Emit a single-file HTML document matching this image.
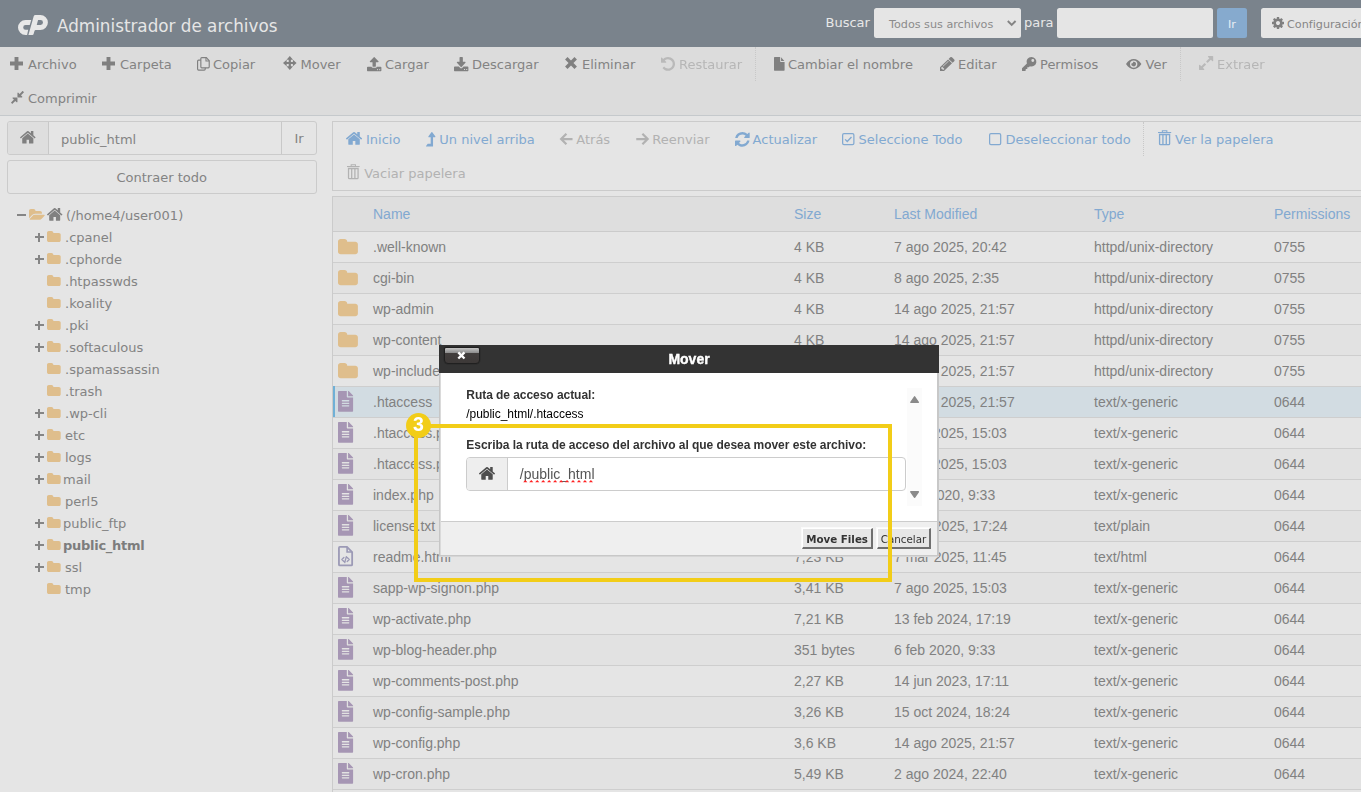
<!DOCTYPE html>
<html lang="es"><head><meta charset="utf-8"><title>Administrador de archivos</title>
<style>
*{box-sizing:border-box;margin:0;padding:0}
html,body{width:1361px;height:792px;overflow:hidden;background:#e5e5e5}
body{position:relative;font-family:"DejaVu Sans","Liberation Sans",sans-serif;font-size:13px;color:#838383}
.i{position:absolute;display:block;overflow:visible}
.t{position:absolute;white-space:nowrap;line-height:20px;height:20px}
.a{font-family:"Liberation Sans",sans-serif;font-size:14px;color:#818181}
#hdr{position:absolute;left:0;top:0;width:1361px;height:47px;background:#7a838c}
#hdr .title{font-size:16.8px;color:#e6e6e6;left:57px;top:16px}
#hdr .lbl{color:#e8e8e8;font-size:13px}
.fld{position:absolute;top:8px;height:30px;background:#e5e5e5;border-radius:2.5px}
#tb{position:absolute;left:0;top:47px;width:1361px;height:69px;background:#dcdcdc;border-bottom:1px solid #c5c9cc}
.sep{position:absolute;top:47px;height:34px;width:0;border-left:1px dotted #c8c8c8}
.dis{color:#b6b6b6;will-change:transform}
.lnk{color:#82a9d1}
.box{position:absolute;border:1px solid #cbcbcb;border-radius:3px}

</style></head>
<body>
<div id="hdr"><svg class="i" style="left:17.790px;top:14.920px" width="29.920" height="20.080" viewBox="100 130 790 530"><path fill="#e8e8e8" fill-rule="evenodd" d="M450 260H300A200 200 0 0 0 300 660H340L370 520H300A62.500 62.500 0 0 1 300 395H410ZM375 660H480Q505 660 512 635L535 550Q542 525 568 525H692A197.500 197.500 0 0 0 692 130H560Q525 130 515 165ZM630 265H695A65 65 0 0 1 695 395H595Z"/></svg><div class="t title">Administrador de archivos</div><div class="t lbl" style="left:825.5px;top:12.5px">Buscar</div><div class="fld" style="left:874px;width:147px"><div class="t" style="left:15px;top:7px;font-size:11.2px;color:#8b8b8b">Todos sus archivos</div><svg class="i" style="left:133.200px;top:11.600px" width="9.400" height="6.600" viewBox="0 0 94 66"><path d="M8 10 47 50 86 10" fill="none" stroke="#848484" stroke-width="19"/></svg></div><div class="t lbl" style="left:1024px;top:12.5px">para</div><div class="fld" style="left:1057px;width:156px"></div><div class="fld" style="left:1217px;width:30px;background:#86aace"><div class="t" style="left:11px;top:7px;font-size:11.2px;color:#e9eef4">Ir</div></div><div class="fld" style="left:1261px;width:110px"><svg class="i" style="left:11px;top:8px" width="12.00" height="14" viewBox="0 -0 1536 1792" ><path fill="#7f7f7f" d="M949 1077Q1024 1002 1024 896Q1024 790 949 715Q874 640 768 640Q662 640 587 715Q512 790 512 896Q512 1002 587 1077Q662 1152 768 1152Q874 1152 949 1077ZM1536 787V1009Q1536 1021 1528 1032Q1520 1043 1508 1045L1323 1073Q1304 1127 1284 1164Q1319 1214 1391 1302Q1401 1314 1401 1327Q1401 1340 1392 1350Q1365 1387 1293 1458Q1221 1529 1199 1529Q1187 1529 1173 1520L1035 1412Q991 1435 944 1450Q928 1586 915 1636Q908 1664 879 1664H657Q643 1664 632 1656Q622 1647 621 1634L593 1450Q544 1434 503 1413L362 1520Q352 1529 337 1529Q323 1529 312 1518Q186 1404 147 1350Q140 1340 140 1327Q140 1315 148 1304Q163 1283 199 1238Q235 1192 253 1167Q226 1117 212 1068L29 1041Q16 1039 8 1028Q0 1018 0 1005V783Q0 771 8 760Q16 749 27 747L213 719Q227 673 252 627Q212 570 145 489Q135 477 135 465Q135 455 144 442Q170 406 242 334Q315 263 337 263Q350 263 363 273L501 380Q545 357 592 342Q608 206 621 156Q628 128 657 128H879Q893 128 904 136Q914 145 915 158L943 342Q992 358 1033 379L1175 272Q1184 263 1199 263Q1212 263 1224 273Q1353 392 1389 443Q1396 451 1396 465Q1396 477 1388 488Q1373 509 1337 554Q1301 600 1283 625Q1309 675 1324 723L1507 751Q1520 753 1528 764Q1536 774 1536 787Z"/></svg><div class="t" style="left:26px;top:7px;font-size:11.2px;color:#858585">Configuración</div></div></div>
<div id="tb"></div><svg class="i" style="left:10.00px;top:57.00px" width="13.00" height="13.00" viewBox="0 0 100 100" preserveAspectRatio="none"><path fill="#808080" d="M35 0h30v35h35v30H65v35H35V65H0V35h35z"/></svg><div class="t" style="left:28px;top:54.5px">Archivo</div><svg class="i" style="left:102.20px;top:57.00px" width="13.00" height="13.00" viewBox="0 0 100 100" preserveAspectRatio="none"><path fill="#808080" d="M35 0h30v35h35v30H65v35H35V65H0V35h35z"/></svg><div class="t" style="left:120px;top:54.5px">Carpeta</div><svg class="i" style="left:197.00px;top:57.00px" width="12.80" height="13.80" viewBox="0 0 100 100" preserveAspectRatio="none"><rect x="4.500" y="22" width="60" height="73.500" rx="8" fill="none" stroke="#808080" stroke-width="9"/><path d="M37 4.500h36l22.500 22.500v44a7 7 0 0 1-7 7H37a7 7 0 0 1-7-7V11.500a7 7 0 0 1 7-7z" fill="#dcdcdc" stroke="#808080" stroke-width="9"/><path d="M70 4.500V29h25" fill="none" stroke="#808080" stroke-width="8"/></svg><div class="t" style="left:213px;top:54.5px">Copiar</div><svg class="i" style="left:282.70px;top:56.00px" width="13.60" height="14.00" viewBox="0 0 100 100" preserveAspectRatio="none"><path fill="#808080" d="M50 0 74 27H58v15h15V26l27 24-27 24V58H58v15h16L50 100 26 73h16V58H27v16L0 50l27-24v16h15V27H26z"/></svg><div class="t" style="left:300.5px;top:54.5px">Mover</div><svg class="i" style="left:367.10px;top:56.50px" width="14.40" height="14.30" viewBox="0 64 1664 1600" preserveAspectRatio="none"><path fill="#808080" d="M1261 1517Q1280 1498 1280 1472Q1280 1446 1261 1427Q1242 1408 1216 1408Q1190 1408 1171 1427Q1152 1446 1152 1472Q1152 1498 1171 1517Q1190 1536 1216 1536Q1242 1536 1261 1517ZM1517 1517Q1536 1498 1536 1472Q1536 1446 1517 1427Q1498 1408 1472 1408Q1446 1408 1427 1427Q1408 1446 1408 1472Q1408 1498 1427 1517Q1446 1536 1472 1536Q1498 1536 1517 1517ZM1664 1248V1568Q1664 1608 1636 1636Q1608 1664 1568 1664H96Q56 1664 28 1636Q0 1608 0 1568V1248Q0 1208 28 1180Q56 1152 96 1152H523Q544 1208 594 1244Q643 1280 704 1280H960Q1021 1280 1070 1244Q1120 1208 1141 1152H1568Q1608 1152 1636 1180Q1664 1208 1664 1248ZM1339 600Q1322 640 1280 640H1024V1088Q1024 1114 1005 1133Q986 1152 960 1152H704Q678 1152 659 1133Q640 1114 640 1088V640H384Q342 640 325 600Q308 561 339 531L787 83Q805 64 832 64Q859 64 877 83L1325 531Q1356 561 1339 600Z"/></svg><div class="t" style="left:385px;top:54.5px">Cargar</div><svg class="i" style="left:454.00px;top:56.50px" width="14.40" height="14.30" viewBox="0 0 1664 1536" preserveAspectRatio="none"><path fill="#808080" d="M1261 1389Q1280 1370 1280 1344Q1280 1318 1261 1299Q1242 1280 1216 1280Q1190 1280 1171 1299Q1152 1318 1152 1344Q1152 1370 1171 1389Q1190 1408 1216 1408Q1242 1408 1261 1389ZM1517 1389Q1536 1370 1536 1344Q1536 1318 1517 1299Q1498 1280 1472 1280Q1446 1280 1427 1299Q1408 1318 1408 1344Q1408 1370 1427 1389Q1446 1408 1472 1408Q1498 1408 1517 1389ZM1664 1120V1440Q1664 1480 1636 1508Q1608 1536 1568 1536H96Q56 1536 28 1508Q0 1480 0 1440V1120Q0 1080 28 1052Q56 1024 96 1024H561L696 1160Q754 1216 832 1216Q910 1216 968 1160L1104 1024H1568Q1608 1024 1636 1052Q1664 1080 1664 1120ZM1339 551Q1356 592 1325 621L877 1069Q859 1088 832 1088Q805 1088 787 1069L339 621Q308 592 325 551Q342 512 384 512H640V64Q640 38 659 19Q678 0 704 0H960Q986 0 1005 19Q1024 38 1024 64V512H1280Q1322 512 1339 551Z"/></svg><div class="t" style="left:472px;top:54.5px">Descargar</div><svg class="i" style="left:565.00px;top:57.30px" width="12.00" height="12.00" viewBox="0 0 100 100" preserveAspectRatio="none"><path fill="#808080" d="M35.500-5.500h29v41h41v29h-41v41h-29v-41h-41v-29h41z" transform="rotate(45 50 50)"/></svg><div class="t" style="left:582px;top:54.5px">Eliminar</div><svg class="i" style="left:661.00px;top:56.80px" width="14.00" height="13.80" viewBox="0 128 1536 1536" preserveAspectRatio="none"><path fill="#b9b9b9" d="M768 1664Q596 1664 441 1592Q286 1519 177 1387Q170 1377 170 1364Q171 1352 179 1344L316 1206Q326 1197 341 1197Q357 1199 364 1209Q437 1304 543 1356Q649 1408 768 1408Q872 1408 966 1368Q1061 1327 1130 1258Q1199 1189 1240 1094Q1280 1000 1280 896Q1280 792 1240 698Q1199 603 1130 534Q1061 465 966 424Q872 384 768 384Q670 384 580 420Q490 455 420 521L557 659Q588 689 571 728Q554 768 512 768H64Q38 768 19 749Q0 730 0 704V256Q0 214 40 197Q79 180 109 211L239 340Q346 239 484 184Q621 128 768 128Q924 128 1066 189Q1208 250 1311 353Q1414 456 1475 598Q1536 740 1536 896Q1536 1052 1475 1194Q1414 1336 1311 1439Q1208 1542 1066 1603Q924 1664 768 1664Z"/></svg><div class="t dis" style="left:679px;top:54.5px">Restaurar</div><svg class="i" style="left:774.20px;top:57.00px" width="10.60" height="13.80" viewBox="0 0 1536 1792" preserveAspectRatio="none"><path fill="#808080" d="M1024 512V40Q1046 54 1060 68L1468 476Q1482 490 1496 512ZM896 544Q896 584 924 612Q952 640 992 640H1536V1696Q1536 1736 1508 1764Q1480 1792 1440 1792H96Q56 1792 28 1764Q0 1736 0 1696V96Q0 56 28 28Q56 0 96 0H896Z"/></svg><div class="t" style="left:788px;top:54.5px">Cambiar el nombre</div><svg class="i" style="left:939.70px;top:56.80px" width="14.60" height="14.00" viewBox="0 149 1515 1515" preserveAspectRatio="none"><path fill="#808080" d="M363 1536 454 1445 219 1210 128 1301V1408H256V1536ZM886 608Q886 586 864 586Q854 586 847 593L305 1135Q298 1142 298 1152Q298 1174 320 1174Q330 1174 337 1167L879 625Q886 618 886 608ZM832 416 1248 832 416 1664H0V1248ZM1515 512Q1515 565 1478 602L1312 768L896 352L1062 187Q1098 149 1152 149Q1205 149 1243 187L1478 421Q1515 460 1515 512Z"/></svg><div class="t" style="left:958px;top:54.5px">Editar</div><svg class="i" style="left:1021.80px;top:56.80px" width="14.40" height="14.00" viewBox="0 0 100 100" preserveAspectRatio="none"><path fill="#808080" fill-rule="evenodd" d="M66 0a34 34 0 1 1-11 66.200L47 74H37v11H26v11l-4 4H4a4 4 0 0 1-4-4V81L34 47A34 34 0 0 1 66 0zm9 15a10 10 0 1 0 0 20 10 10 0 0 0 0-20z"/></svg><div class="t" style="left:1040px;top:54.5px">Permisos</div><svg class="i" style="left:1126.20px;top:58.80px" width="15.40" height="10.20" viewBox="0 0 100 66" preserveAspectRatio="none"><path fill="#808080" fill-rule="evenodd" d="M0 33C14 11 31 0 50 0s36 11 50 33C86 55 69 66 50 66S14 55 0 33zM50 9a24 24 0 1 0 0 48 24 24 0 0 0 0-48zm0 9a15 15 0 1 1-14 10 8 8 0 0 0 10-9.500 15 15 0 0 1 4-.500z"/></svg><div class="t" style="left:1145.5px;top:54.5px">Ver</div><svg class="i" style="left:1198.80px;top:56.00px" width="14.20" height="14.00" viewBox="0 128 1536 1536" preserveAspectRatio="none"><path fill="#b9b9b9" d="M745 1079 413 1411 557 1555Q576 1574 576 1600Q576 1626 557 1645Q538 1664 512 1664H64Q38 1664 19 1645Q0 1626 0 1600V1152Q0 1126 19 1107Q38 1088 64 1088Q90 1088 109 1107L253 1251L585 919Q595 909 608 909Q621 909 631 919L745 1033Q755 1043 755 1056Q755 1069 745 1079ZM1536 192V640Q1536 666 1517 685Q1498 704 1472 704Q1446 704 1427 685L1283 541L951 873Q941 883 928 883Q915 883 905 873L791 759Q781 749 781 736Q781 723 791 713L1123 381L979 237Q960 218 960 192Q960 166 979 147Q998 128 1024 128H1472Q1498 128 1517 147Q1536 166 1536 192Z"/></svg><div class="t dis" style="left:1217px;top:54.5px">Extraer</div><svg class="i" style="left:10.60px;top:90.60px" width="12.90" height="12.90" viewBox="13 141 1510 1510" preserveAspectRatio="none"><path fill="#808080" d="M768 960V1408Q768 1434 749 1453Q730 1472 704 1472Q678 1472 659 1453L515 1309L183 1641Q173 1651 160 1651Q147 1651 137 1641L23 1527Q13 1517 13 1504Q13 1491 23 1481L355 1149L211 1005Q192 986 192 960Q192 934 211 915Q230 896 256 896H704Q730 896 749 915Q768 934 768 960ZM1513 311 1181 643 1325 787Q1344 806 1344 832Q1344 858 1325 877Q1306 896 1280 896H832Q806 896 787 877Q768 858 768 832V384Q768 358 787 339Q806 320 832 320Q858 320 877 339L1021 483L1353 151Q1363 141 1376 141Q1389 141 1399 151L1513 265Q1523 275 1523 288Q1523 301 1513 311Z"/></svg><div class="t" style="left:28px;top:88.5px">Comprimir</div><div class="sep" style="left:755px"></div><div class="sep" style="left:1180px"></div>
<div class="box" style="left:7px;top:121px;width:310px;height:34px;border-radius:3px"></div><div style="position:absolute;left:8px;top:122px;width:41px;height:32px;background:#dedede;border-right:1px solid #c8c8c8;border-radius:2px 0 0 2px"></div><svg class="i" style="left:20.20px;top:131.40px" width="15.60" height="12.60" viewBox="26 253 1612 1283" preserveAspectRatio="none"><path fill="#808080" d="M1408 992V1472Q1408 1498 1389 1517Q1370 1536 1344 1536H960V1152H704V1536H320Q294 1536 275 1517Q256 1498 256 1472V992Q256 991 256 989Q257 987 257 986L832 512L1407 986Q1408 988 1408 992ZM1631 923 1569 997Q1561 1006 1548 1008H1545Q1532 1008 1524 1001L832 424L140 1001Q128 1009 116 1008Q103 1006 95 997L33 923Q25 913 26 900Q27 886 37 878L756 279Q788 253 832 253Q876 253 908 279L1152 483V288Q1152 274 1161 265Q1170 256 1184 256H1376Q1390 256 1399 265Q1408 274 1408 288V696L1627 878Q1637 886 1638 900Q1639 913 1631 923Z"/></svg><div class="t" style="left:61px;top:129.5px">public_html</div><div style="position:absolute;left:281px;top:122px;width:1px;height:32px;background:#c8c8c8"></div><div class="t" style="left:294.5px;top:129px">Ir</div><div class="box" style="left:7px;top:160px;width:310px;height:34px;border-radius:3px"></div><div class="t" style="left:116.5px;top:167.5px">Contraer todo</div><div style="position:absolute;left:17px;top:213.600px;width:9px;height:2px;background:#858585"></div><svg class="i" style="left:28.70px;top:209.20px" width="15.80" height="10.70" viewBox="0 128 1879 1408" preserveAspectRatio="none"><path fill="#dfbe8c" d="M1879 952Q1879 983 1848 1018L1512 1414Q1469 1465 1392 1500Q1314 1536 1248 1536H160Q126 1536 100 1523Q73 1510 73 1480Q73 1449 104 1414L440 1018Q483 967 560 932Q638 896 704 896H1792Q1826 896 1852 909Q1879 922 1879 952ZM1536 608V768H704Q610 768 507 816Q404 863 343 935L6 1331L1 1337Q1 1333 0 1324Q0 1316 0 1312V352Q0 260 66 194Q132 128 224 128H544Q636 128 702 194Q768 260 768 352V384H1312Q1404 384 1470 450Q1536 516 1536 608Z"/></svg><svg class="i" style="left:47.40px;top:208.20px" width="15.40" height="12.70" viewBox="26 253 1612 1283" preserveAspectRatio="none"><path fill="#808080" d="M1408 992V1472Q1408 1498 1389 1517Q1370 1536 1344 1536H960V1152H704V1536H320Q294 1536 275 1517Q256 1498 256 1472V992Q256 991 256 989Q257 987 257 986L832 512L1407 986Q1408 988 1408 992ZM1631 923 1569 997Q1561 1006 1548 1008H1545Q1532 1008 1524 1001L832 424L140 1001Q128 1009 116 1008Q103 1006 95 997L33 923Q25 913 26 900Q27 886 37 878L756 279Q788 253 832 253Q876 253 908 279L1152 483V288Q1152 274 1161 265Q1170 256 1184 256H1376Q1390 256 1399 265Q1408 274 1408 288V696L1627 878Q1637 886 1638 900Q1639 913 1631 923Z"/></svg><div class="t" style="left:66px;top:205.5px">(/home4/user001)</div><div style="position:absolute;left:34.800px;top:236.3px;width:9px;height:1.700px;background:#858585"></div><div style="position:absolute;left:38.400px;top:232.6px;width:1.900px;height:9.300px;background:#858585"></div><svg class="i" style="left:47.00px;top:231.30px" width="13.70" height="10.90" viewBox="0 128 1664 1408" preserveAspectRatio="none"><path fill="#dfbe8c" d="M1664 608V1312Q1664 1404 1598 1470Q1532 1536 1440 1536H224Q132 1536 66 1470Q0 1404 0 1312V352Q0 260 66 194Q132 128 224 128H544Q636 128 702 194Q768 260 768 352V384H1440Q1532 384 1598 450Q1664 516 1664 608Z"/></svg><div class="t" style="left:65px;top:227.5px">.cpanel</div><div style="position:absolute;left:34.800px;top:258.3px;width:9px;height:1.700px;background:#858585"></div><div style="position:absolute;left:38.400px;top:254.6px;width:1.900px;height:9.300px;background:#858585"></div><svg class="i" style="left:47.00px;top:253.30px" width="13.70" height="10.90" viewBox="0 128 1664 1408" preserveAspectRatio="none"><path fill="#dfbe8c" d="M1664 608V1312Q1664 1404 1598 1470Q1532 1536 1440 1536H224Q132 1536 66 1470Q0 1404 0 1312V352Q0 260 66 194Q132 128 224 128H544Q636 128 702 194Q768 260 768 352V384H1440Q1532 384 1598 450Q1664 516 1664 608Z"/></svg><div class="t" style="left:65px;top:249.5px">.cphorde</div><svg class="i" style="left:47.00px;top:275.30px" width="13.70" height="10.90" viewBox="0 128 1664 1408" preserveAspectRatio="none"><path fill="#dfbe8c" d="M1664 608V1312Q1664 1404 1598 1470Q1532 1536 1440 1536H224Q132 1536 66 1470Q0 1404 0 1312V352Q0 260 66 194Q132 128 224 128H544Q636 128 702 194Q768 260 768 352V384H1440Q1532 384 1598 450Q1664 516 1664 608Z"/></svg><div class="t" style="left:65px;top:271.5px">.htpasswds</div><svg class="i" style="left:47.00px;top:297.30px" width="13.70" height="10.90" viewBox="0 128 1664 1408" preserveAspectRatio="none"><path fill="#dfbe8c" d="M1664 608V1312Q1664 1404 1598 1470Q1532 1536 1440 1536H224Q132 1536 66 1470Q0 1404 0 1312V352Q0 260 66 194Q132 128 224 128H544Q636 128 702 194Q768 260 768 352V384H1440Q1532 384 1598 450Q1664 516 1664 608Z"/></svg><div class="t" style="left:65px;top:293.5px">.koality</div><div style="position:absolute;left:34.800px;top:324.3px;width:9px;height:1.700px;background:#858585"></div><div style="position:absolute;left:38.400px;top:320.6px;width:1.900px;height:9.300px;background:#858585"></div><svg class="i" style="left:47.00px;top:319.30px" width="13.70" height="10.90" viewBox="0 128 1664 1408" preserveAspectRatio="none"><path fill="#dfbe8c" d="M1664 608V1312Q1664 1404 1598 1470Q1532 1536 1440 1536H224Q132 1536 66 1470Q0 1404 0 1312V352Q0 260 66 194Q132 128 224 128H544Q636 128 702 194Q768 260 768 352V384H1440Q1532 384 1598 450Q1664 516 1664 608Z"/></svg><div class="t" style="left:65px;top:315.5px">.pki</div><div style="position:absolute;left:34.800px;top:346.3px;width:9px;height:1.700px;background:#858585"></div><div style="position:absolute;left:38.400px;top:342.6px;width:1.900px;height:9.300px;background:#858585"></div><svg class="i" style="left:47.00px;top:341.30px" width="13.70" height="10.90" viewBox="0 128 1664 1408" preserveAspectRatio="none"><path fill="#dfbe8c" d="M1664 608V1312Q1664 1404 1598 1470Q1532 1536 1440 1536H224Q132 1536 66 1470Q0 1404 0 1312V352Q0 260 66 194Q132 128 224 128H544Q636 128 702 194Q768 260 768 352V384H1440Q1532 384 1598 450Q1664 516 1664 608Z"/></svg><div class="t" style="left:65px;top:337.5px">.softaculous</div><svg class="i" style="left:47.00px;top:363.30px" width="13.70" height="10.90" viewBox="0 128 1664 1408" preserveAspectRatio="none"><path fill="#dfbe8c" d="M1664 608V1312Q1664 1404 1598 1470Q1532 1536 1440 1536H224Q132 1536 66 1470Q0 1404 0 1312V352Q0 260 66 194Q132 128 224 128H544Q636 128 702 194Q768 260 768 352V384H1440Q1532 384 1598 450Q1664 516 1664 608Z"/></svg><div class="t" style="left:65px;top:359.5px">.spamassassin</div><svg class="i" style="left:47.00px;top:385.30px" width="13.70" height="10.90" viewBox="0 128 1664 1408" preserveAspectRatio="none"><path fill="#dfbe8c" d="M1664 608V1312Q1664 1404 1598 1470Q1532 1536 1440 1536H224Q132 1536 66 1470Q0 1404 0 1312V352Q0 260 66 194Q132 128 224 128H544Q636 128 702 194Q768 260 768 352V384H1440Q1532 384 1598 450Q1664 516 1664 608Z"/></svg><div class="t" style="left:65px;top:381.5px">.trash</div><div style="position:absolute;left:34.800px;top:412.3px;width:9px;height:1.700px;background:#858585"></div><div style="position:absolute;left:38.400px;top:408.6px;width:1.900px;height:9.300px;background:#858585"></div><svg class="i" style="left:47.00px;top:407.30px" width="13.70" height="10.90" viewBox="0 128 1664 1408" preserveAspectRatio="none"><path fill="#dfbe8c" d="M1664 608V1312Q1664 1404 1598 1470Q1532 1536 1440 1536H224Q132 1536 66 1470Q0 1404 0 1312V352Q0 260 66 194Q132 128 224 128H544Q636 128 702 194Q768 260 768 352V384H1440Q1532 384 1598 450Q1664 516 1664 608Z"/></svg><div class="t" style="left:65px;top:403.5px">.wp-cli</div><div style="position:absolute;left:34.800px;top:434.3px;width:9px;height:1.700px;background:#858585"></div><div style="position:absolute;left:38.400px;top:430.6px;width:1.900px;height:9.300px;background:#858585"></div><svg class="i" style="left:47.00px;top:429.30px" width="13.70" height="10.90" viewBox="0 128 1664 1408" preserveAspectRatio="none"><path fill="#dfbe8c" d="M1664 608V1312Q1664 1404 1598 1470Q1532 1536 1440 1536H224Q132 1536 66 1470Q0 1404 0 1312V352Q0 260 66 194Q132 128 224 128H544Q636 128 702 194Q768 260 768 352V384H1440Q1532 384 1598 450Q1664 516 1664 608Z"/></svg><div class="t" style="left:65px;top:425.5px">etc</div><div style="position:absolute;left:34.800px;top:456.3px;width:9px;height:1.700px;background:#858585"></div><div style="position:absolute;left:38.400px;top:452.6px;width:1.900px;height:9.300px;background:#858585"></div><svg class="i" style="left:47.00px;top:451.30px" width="13.70" height="10.90" viewBox="0 128 1664 1408" preserveAspectRatio="none"><path fill="#dfbe8c" d="M1664 608V1312Q1664 1404 1598 1470Q1532 1536 1440 1536H224Q132 1536 66 1470Q0 1404 0 1312V352Q0 260 66 194Q132 128 224 128H544Q636 128 702 194Q768 260 768 352V384H1440Q1532 384 1598 450Q1664 516 1664 608Z"/></svg><div class="t" style="left:65px;top:447.5px">logs</div><div style="position:absolute;left:34.800px;top:478.3px;width:9px;height:1.700px;background:#858585"></div><div style="position:absolute;left:38.400px;top:474.6px;width:1.900px;height:9.300px;background:#858585"></div><svg class="i" style="left:47.00px;top:473.30px" width="13.70" height="10.90" viewBox="0 128 1664 1408" preserveAspectRatio="none"><path fill="#dfbe8c" d="M1664 608V1312Q1664 1404 1598 1470Q1532 1536 1440 1536H224Q132 1536 66 1470Q0 1404 0 1312V352Q0 260 66 194Q132 128 224 128H544Q636 128 702 194Q768 260 768 352V384H1440Q1532 384 1598 450Q1664 516 1664 608Z"/></svg><div class="t" style="left:63px;top:469.5px">mail</div><svg class="i" style="left:47.00px;top:495.30px" width="13.70" height="10.90" viewBox="0 128 1664 1408" preserveAspectRatio="none"><path fill="#dfbe8c" d="M1664 608V1312Q1664 1404 1598 1470Q1532 1536 1440 1536H224Q132 1536 66 1470Q0 1404 0 1312V352Q0 260 66 194Q132 128 224 128H544Q636 128 702 194Q768 260 768 352V384H1440Q1532 384 1598 450Q1664 516 1664 608Z"/></svg><div class="t" style="left:65px;top:491.5px">perl5</div><div style="position:absolute;left:34.800px;top:522.3px;width:9px;height:1.700px;background:#858585"></div><div style="position:absolute;left:38.400px;top:518.6px;width:1.900px;height:9.300px;background:#858585"></div><svg class="i" style="left:47.00px;top:517.30px" width="13.70" height="10.90" viewBox="0 128 1664 1408" preserveAspectRatio="none"><path fill="#dfbe8c" d="M1664 608V1312Q1664 1404 1598 1470Q1532 1536 1440 1536H224Q132 1536 66 1470Q0 1404 0 1312V352Q0 260 66 194Q132 128 224 128H544Q636 128 702 194Q768 260 768 352V384H1440Q1532 384 1598 450Q1664 516 1664 608Z"/></svg><div class="t" style="left:63px;top:513.5px">public_ftp</div><div style="position:absolute;left:34.800px;top:544.3px;width:9px;height:1.700px;background:#858585"></div><div style="position:absolute;left:38.400px;top:540.6px;width:1.900px;height:9.300px;background:#858585"></div><svg class="i" style="left:47.00px;top:539.30px" width="13.70" height="10.90" viewBox="0 128 1664 1408" preserveAspectRatio="none"><path fill="#dfbe8c" d="M1664 608V1312Q1664 1404 1598 1470Q1532 1536 1440 1536H224Q132 1536 66 1470Q0 1404 0 1312V352Q0 260 66 194Q132 128 224 128H544Q636 128 702 194Q768 260 768 352V384H1440Q1532 384 1598 450Q1664 516 1664 608Z"/></svg><div class="t" style="left:63px;top:535.5px;font-weight:bold;color:#7d7d7d;letter-spacing:-0.280px">public_html</div><div style="position:absolute;left:34.800px;top:566.3px;width:9px;height:1.700px;background:#858585"></div><div style="position:absolute;left:38.400px;top:562.6px;width:1.900px;height:9.300px;background:#858585"></div><svg class="i" style="left:47.00px;top:561.30px" width="13.70" height="10.90" viewBox="0 128 1664 1408" preserveAspectRatio="none"><path fill="#dfbe8c" d="M1664 608V1312Q1664 1404 1598 1470Q1532 1536 1440 1536H224Q132 1536 66 1470Q0 1404 0 1312V352Q0 260 66 194Q132 128 224 128H544Q636 128 702 194Q768 260 768 352V384H1440Q1532 384 1598 450Q1664 516 1664 608Z"/></svg><div class="t" style="left:65px;top:557.5px">ssl</div><svg class="i" style="left:47.00px;top:583.30px" width="13.70" height="10.90" viewBox="0 128 1664 1408" preserveAspectRatio="none"><path fill="#dfbe8c" d="M1664 608V1312Q1664 1404 1598 1470Q1532 1536 1440 1536H224Q132 1536 66 1470Q0 1404 0 1312V352Q0 260 66 194Q132 128 224 128H544Q636 128 702 194Q768 260 768 352V384H1440Q1532 384 1598 450Q1664 516 1664 608Z"/></svg><div class="t" style="left:65px;top:579.5px">tmp</div>
<div class="box" style="left:332px;top:121px;width:1040px;height:70px;border-radius:0"></div><svg class="i" style="left:345.90px;top:132.20px" width="16.10" height="12.80" viewBox="26 253 1612 1283" preserveAspectRatio="none"><path fill="#82a9d1" d="M1408 992V1472Q1408 1498 1389 1517Q1370 1536 1344 1536H960V1152H704V1536H320Q294 1536 275 1517Q256 1498 256 1472V992Q256 991 256 989Q257 987 257 986L832 512L1407 986Q1408 988 1408 992ZM1631 923 1569 997Q1561 1006 1548 1008H1545Q1532 1008 1524 1001L832 424L140 1001Q128 1009 116 1008Q103 1006 95 997L33 923Q25 913 26 900Q27 886 37 878L756 279Q788 253 832 253Q876 253 908 279L1152 483V288Q1152 274 1161 265Q1170 256 1184 256H1376Q1390 256 1399 265Q1408 274 1408 288V696L1627 878Q1637 886 1638 900Q1639 913 1631 923Z"/></svg><div class="t" style="left:366px;top:129.5px;color:#82a9d1">Inicio</div><svg class="i" style="left:426.00px;top:131.50px" width="9.40" height="14.50" viewBox="-0 129 1025 1407" preserveAspectRatio="none"><path fill="#82a9d1" d="M1018 603Q1000 640 960 640H768V1504Q768 1518 759 1527Q750 1536 736 1536H32Q11 1536 3 1518Q-5 1498 7 1483L167 1291Q176 1280 192 1280H512V640H320Q280 640 262 603Q245 566 271 535L591 151Q609 129 640 129Q671 129 689 151L1009 535Q1036 567 1018 603Z"/></svg><div class="t" style="left:439.3px;top:129.5px;color:#82a9d1">Un nivel arriba</div><svg class="i" style="left:560.10px;top:132.80px" width="12.80" height="12.10" viewBox="0 0 100 95" preserveAspectRatio="none"><path d="M98 47.500H14M50 6 9 47.500 50 89" fill="none" stroke="#b2b2b2" stroke-width="17.500"/></svg><div class="t" style="left:576.3px;top:129.5px;color:#b2b2b2">Atrás</div><svg class="i" style="left:635.80px;top:132.80px" width="12.80" height="12.10" viewBox="0 0 100 95" preserveAspectRatio="none"><path d="M2 47.500H86M50 6 91 47.500 50 89" fill="none" stroke="#b2b2b2" stroke-width="17.500"/></svg><div class="t" style="left:652.3px;top:129.5px;color:#b2b2b2">Reenviar</div><svg class="i" style="left:734.60px;top:131.50px" width="14.70" height="14.70" viewBox="0 128 1536 1536" preserveAspectRatio="none"><path fill="#82a9d1" d="M1511 1056Q1511 1061 1510 1063Q1446 1331 1242 1498Q1038 1664 764 1664Q618 1664 482 1609Q345 1554 238 1452L109 1581Q90 1600 64 1600Q38 1600 19 1581Q0 1562 0 1536V1088Q0 1062 19 1043Q38 1024 64 1024H512Q538 1024 557 1043Q576 1062 576 1088Q576 1114 557 1133L420 1270Q491 1336 581 1372Q671 1408 768 1408Q902 1408 1018 1343Q1134 1278 1204 1164Q1215 1147 1257 1047Q1265 1024 1287 1024H1479Q1492 1024 1502 1034Q1511 1043 1511 1056ZM1536 256V704Q1536 730 1517 749Q1498 768 1472 768H1024Q998 768 979 749Q960 730 960 704Q960 678 979 659L1117 521Q969 384 768 384Q634 384 518 449Q402 514 332 628Q321 645 279 745Q271 768 249 768H50Q37 768 28 758Q18 749 18 736V729Q83 461 288 294Q493 128 768 128Q914 128 1052 184Q1190 239 1297 340L1427 211Q1446 192 1472 192Q1498 192 1517 211Q1536 230 1536 256Z"/></svg><div class="t" style="left:752.6px;top:129.5px;color:#82a9d1">Actualizar</div><svg class="i" style="left:842.30px;top:132.70px" width="12.50" height="12.30" viewBox="0 0 100 100" preserveAspectRatio="none"><rect x="5" y="5" width="90" height="90" rx="11" fill="none" stroke="#82a9d1" stroke-width="10"/><path d="M25 52l17 17 34-36" fill="none" stroke="#82a9d1" stroke-width="11"/></svg><div class="t" style="left:858.6px;top:129.5px;color:#82a9d1">Seleccione Todo</div><svg class="i" style="left:988.90px;top:132.70px" width="12.30" height="12.30" viewBox="0 0 100 100" preserveAspectRatio="none"><rect x="5" y="5" width="90" height="90" rx="11" fill="none" stroke="#82a9d1" stroke-width="10"/></svg><div class="t" style="left:1005.5px;top:129.5px;color:#82a9d1">Deseleccionar todo</div><svg class="i" style="left:1158.40px;top:129.70px" width="13.20" height="15.30" viewBox="0 0 100 116" preserveAspectRatio="none"><g fill="none" stroke="#82a9d1" stroke-width="9"><path d="M33 15V5H67V15" stroke-width="8"/><path d="M0 19H100" stroke-width="8"/><path d="M12 34H88V104a7 7 0 0 1-7 7H19a7 7 0 0 1-7-7z" stroke-width="10"/><path d="M37.300 32V108M62.700 32V108" stroke-width="10"/></g></svg><div class="t" style="left:1175px;top:129.5px;color:#82a9d1">Ver la papelera</div><svg class="i" style="left:347.40px;top:163.70px" width="12.60" height="15.30" viewBox="0 0 100 116" preserveAspectRatio="none"><g fill="none" stroke="#b2b2b2" stroke-width="9"><path d="M33 15V5H67V15" stroke-width="8"/><path d="M0 19H100" stroke-width="8"/><path d="M12 34H88V104a7 7 0 0 1-7 7H19a7 7 0 0 1-7-7z" stroke-width="10"/><path d="M37.300 32V108M62.700 32V108" stroke-width="10"/></g></svg><div class="t" style="left:364.2px;top:163.5px;color:#b2b2b2">Vaciar papelera</div><div class="sep" style="left:1143px;top:122px"></div>
<div style="position:absolute;left:332px;top:196px;width:1040px;height:600px;border:1px solid #cbcbcb;border-right:0"></div><div style="position:absolute;left:333px;top:197px;width:1040px;height:35px;background:#dedede;border-bottom:1px solid #cbcbcb"></div><div class="t a lnk" style="left:373px;top:204px">Name</div><div class="t a lnk" style="left:794px;top:204px">Size</div><div class="t a lnk" style="left:894px;top:204px">Last Modified</div><div class="t a lnk" style="left:1094px;top:204px">Type</div><div class="t a lnk" style="left:1274px;top:204px">Permissions</div><div style="position:absolute;left:333px;top:232px;width:1040px;height:31px;background:#e5e5e5;border-bottom:1px solid #cecece"></div><svg class="i" style="left:338.00px;top:238.80px" width="19.90" height="15.20" viewBox="0 128 1664 1408" preserveAspectRatio="none"><path fill="#dfbe8c" d="M1664 608V1312Q1664 1404 1598 1470Q1532 1536 1440 1536H224Q132 1536 66 1470Q0 1404 0 1312V352Q0 260 66 194Q132 128 224 128H544Q636 128 702 194Q768 260 768 352V384H1440Q1532 384 1598 450Q1664 516 1664 608Z"/></svg><div class="t a" style="left:373px;top:237px">.well-known</div><div class="t a" style="left:794px;top:237px">4 KB</div><div class="t a" style="left:894px;top:237px">7 ago 2025, 20:42</div><div class="t a" style="left:1094px;top:237px">httpd/unix-directory</div><div class="t a" style="left:1274px;top:237px">0755</div><div style="position:absolute;left:333px;top:263px;width:1040px;height:31px;background:#e2e2e2;border-bottom:1px solid #cecece"></div><svg class="i" style="left:338.00px;top:269.80px" width="19.90" height="15.20" viewBox="0 128 1664 1408" preserveAspectRatio="none"><path fill="#dfbe8c" d="M1664 608V1312Q1664 1404 1598 1470Q1532 1536 1440 1536H224Q132 1536 66 1470Q0 1404 0 1312V352Q0 260 66 194Q132 128 224 128H544Q636 128 702 194Q768 260 768 352V384H1440Q1532 384 1598 450Q1664 516 1664 608Z"/></svg><div class="t a" style="left:373px;top:268px">cgi-bin</div><div class="t a" style="left:794px;top:268px">4 KB</div><div class="t a" style="left:894px;top:268px">8 ago 2025, 2:35</div><div class="t a" style="left:1094px;top:268px">httpd/unix-directory</div><div class="t a" style="left:1274px;top:268px">0755</div><div style="position:absolute;left:333px;top:294px;width:1040px;height:31px;background:#e5e5e5;border-bottom:1px solid #cecece"></div><svg class="i" style="left:338.00px;top:300.80px" width="19.90" height="15.20" viewBox="0 128 1664 1408" preserveAspectRatio="none"><path fill="#dfbe8c" d="M1664 608V1312Q1664 1404 1598 1470Q1532 1536 1440 1536H224Q132 1536 66 1470Q0 1404 0 1312V352Q0 260 66 194Q132 128 224 128H544Q636 128 702 194Q768 260 768 352V384H1440Q1532 384 1598 450Q1664 516 1664 608Z"/></svg><div class="t a" style="left:373px;top:299px">wp-admin</div><div class="t a" style="left:794px;top:299px">4 KB</div><div class="t a" style="left:894px;top:299px">14 ago 2025, 21:57</div><div class="t a" style="left:1094px;top:299px">httpd/unix-directory</div><div class="t a" style="left:1274px;top:299px">0755</div><div style="position:absolute;left:333px;top:325px;width:1040px;height:31px;background:#e2e2e2;border-bottom:1px solid #cecece"></div><svg class="i" style="left:338.00px;top:331.80px" width="19.90" height="15.20" viewBox="0 128 1664 1408" preserveAspectRatio="none"><path fill="#dfbe8c" d="M1664 608V1312Q1664 1404 1598 1470Q1532 1536 1440 1536H224Q132 1536 66 1470Q0 1404 0 1312V352Q0 260 66 194Q132 128 224 128H544Q636 128 702 194Q768 260 768 352V384H1440Q1532 384 1598 450Q1664 516 1664 608Z"/></svg><div class="t a" style="left:373px;top:330px">wp-content</div><div class="t a" style="left:794px;top:330px">4 KB</div><div class="t a" style="left:894px;top:330px">14 ago 2025, 21:57</div><div class="t a" style="left:1094px;top:330px">httpd/unix-directory</div><div class="t a" style="left:1274px;top:330px">0755</div><div style="position:absolute;left:333px;top:356px;width:1040px;height:31px;background:#e5e5e5;border-bottom:1px solid #cecece"></div><svg class="i" style="left:338.00px;top:362.80px" width="19.90" height="15.20" viewBox="0 128 1664 1408" preserveAspectRatio="none"><path fill="#dfbe8c" d="M1664 608V1312Q1664 1404 1598 1470Q1532 1536 1440 1536H224Q132 1536 66 1470Q0 1404 0 1312V352Q0 260 66 194Q132 128 224 128H544Q636 128 702 194Q768 260 768 352V384H1440Q1532 384 1598 450Q1664 516 1664 608Z"/></svg><div class="t a" style="left:373px;top:361px">wp-includes</div><div class="t a" style="left:794px;top:361px">4 KB</div><div class="t a" style="left:894px;top:361px">14 ago 2025, 21:57</div><div class="t a" style="left:1094px;top:361px">httpd/unix-directory</div><div class="t a" style="left:1274px;top:361px">0755</div><div style="position:absolute;left:333px;top:387px;width:1040px;height:31px;background:#d2dce2;border-bottom:1px solid #cecece"></div><div style="position:absolute;left:333px;top:386px;width:2px;height:31px;background:#70b0d6"></div><svg class="i" style="left:338.00px;top:391.10px" width="15.10" height="20.80" viewBox="0 0 384 512" preserveAspectRatio="none"><path fill="#a696b4" fill-rule="evenodd" d="M224 136V0H24C10.700 0 0 10.700 0 24v464c0 13.300 10.700 24 24 24h336c13.300 0 24-10.700 24-24V160H248c-13.200 0-24-10.800-24-24zm64 236c0 6.600-5.400 12-12 12H108c-6.600 0-12-5.400-12-12v-8c0-6.600 5.400-12 12-12h168c6.600 0 12 5.400 12 12v8zm0-64c0 6.600-5.400 12-12 12H108c-6.600 0-12-5.400-12-12v-8c0-6.600 5.400-12 12-12h168c6.600 0 12 5.400 12 12v8zm0-72v8c0 6.600-5.400 12-12 12H108c-6.600 0-12-5.400-12-12v-8c0-6.600 5.400-12 12-12h168c6.600 0 12 5.400 12 12zm96-114.100v6.100H256V0h6.100c6.400 0 12.500 2.500 17 7l97.900 98c4.500 4.500 7 10.600 7 16.900z"/></svg><div class="t a" style="left:373px;top:392px">.htaccess</div><div class="t a" style="left:940.72px;top:392px">2025, 21:57</div><div class="t a" style="left:1094px;top:392px">text/x-generic</div><div class="t a" style="left:1274px;top:392px">0644</div><div style="position:absolute;left:333px;top:418px;width:1040px;height:31px;background:#e5e5e5;border-bottom:1px solid #cecece"></div><svg class="i" style="left:338.00px;top:422.10px" width="15.10" height="20.80" viewBox="0 0 384 512" preserveAspectRatio="none"><path fill="#a696b4" fill-rule="evenodd" d="M224 136V0H24C10.700 0 0 10.700 0 24v464c0 13.300 10.700 24 24 24h336c13.300 0 24-10.700 24-24V160H248c-13.200 0-24-10.800-24-24zm64 236c0 6.600-5.400 12-12 12H108c-6.600 0-12-5.400-12-12v-8c0-6.600 5.400-12 12-12h168c6.600 0 12 5.400 12 12v8zm0-64c0 6.600-5.400 12-12 12H108c-6.600 0-12-5.400-12-12v-8c0-6.600 5.400-12 12-12h168c6.600 0 12 5.400 12 12v8zm0-72v8c0 6.600-5.400 12-12 12H108c-6.600 0-12-5.400-12-12v-8c0-6.600 5.400-12 12-12h168c6.600 0 12 5.400 12 12zm96-114.100v6.100H256V0h6.100c6.400 0 12.500 2.500 17 7l97.900 98c4.500 4.500 7 10.600 7 16.900z"/></svg><div class="t a" style="left:373px;top:423px">.htaccess.p</div><div class="t a" style="left:932.94px;top:423px">2025, 15:03</div><div class="t a" style="left:1094px;top:423px">text/x-generic</div><div class="t a" style="left:1274px;top:423px">0644</div><div style="position:absolute;left:333px;top:449px;width:1040px;height:31px;background:#e2e2e2;border-bottom:1px solid #cecece"></div><svg class="i" style="left:338.00px;top:453.10px" width="15.10" height="20.80" viewBox="0 0 384 512" preserveAspectRatio="none"><path fill="#a696b4" fill-rule="evenodd" d="M224 136V0H24C10.700 0 0 10.700 0 24v464c0 13.300 10.700 24 24 24h336c13.300 0 24-10.700 24-24V160H248c-13.200 0-24-10.800-24-24zm64 236c0 6.600-5.400 12-12 12H108c-6.600 0-12-5.400-12-12v-8c0-6.600 5.400-12 12-12h168c6.600 0 12 5.400 12 12v8zm0-64c0 6.600-5.400 12-12 12H108c-6.600 0-12-5.400-12-12v-8c0-6.600 5.400-12 12-12h168c6.600 0 12 5.400 12 12v8zm0-72v8c0 6.600-5.400 12-12 12H108c-6.600 0-12-5.400-12-12v-8c0-6.600 5.400-12 12-12h168c6.600 0 12 5.400 12 12zm96-114.100v6.100H256V0h6.100c6.400 0 12.500 2.500 17 7l97.900 98c4.500 4.500 7 10.600 7 16.900z"/></svg><div class="t a" style="left:373px;top:454px">.htaccess.p</div><div class="t a" style="left:932.94px;top:454px">2025, 15:03</div><div class="t a" style="left:1094px;top:454px">text/x-generic</div><div class="t a" style="left:1274px;top:454px">0644</div><div style="position:absolute;left:333px;top:480px;width:1040px;height:31px;background:#e5e5e5;border-bottom:1px solid #cecece"></div><svg class="i" style="left:338.00px;top:484.10px" width="15.10" height="20.80" viewBox="0 0 384 512" preserveAspectRatio="none"><path fill="#a696b4" fill-rule="evenodd" d="M224 136V0H24C10.700 0 0 10.700 0 24v464c0 13.300 10.700 24 24 24h336c13.300 0 24-10.700 24-24V160H248c-13.200 0-24-10.800-24-24zm64 236c0 6.600-5.400 12-12 12H108c-6.600 0-12-5.400-12-12v-8c0-6.600 5.400-12 12-12h168c6.600 0 12 5.400 12 12v8zm0-64c0 6.600-5.400 12-12 12H108c-6.600 0-12-5.400-12-12v-8c0-6.600 5.400-12 12-12h168c6.600 0 12 5.400 12 12v8zm0-72v8c0 6.600-5.400 12-12 12H108c-6.600 0-12-5.400-12-12v-8c0-6.600 5.400-12 12-12h168c6.600 0 12 5.400 12 12zm96-114.100v6.100H256V0h6.100c6.400 0 12.500 2.500 17 7l97.900 98c4.500 4.500 7 10.600 7 16.900z"/></svg><div class="t a" style="left:373px;top:485px">index.php</div><div class="t a" style="left:929.03px;top:485px">2020, 9:33</div><div class="t a" style="left:1094px;top:485px">text/x-generic</div><div class="t a" style="left:1274px;top:485px">0644</div><div style="position:absolute;left:333px;top:511px;width:1040px;height:31px;background:#e2e2e2;border-bottom:1px solid #cecece"></div><svg class="i" style="left:338.00px;top:515.10px" width="15.10" height="20.80" viewBox="0 0 384 512" preserveAspectRatio="none"><path fill="#a696b4" fill-rule="evenodd" d="M224 136V0H24C10.700 0 0 10.700 0 24v464c0 13.300 10.700 24 24 24h336c13.300 0 24-10.700 24-24V160H248c-13.200 0-24-10.800-24-24zm64 236c0 6.600-5.400 12-12 12H108c-6.600 0-12-5.400-12-12v-8c0-6.600 5.400-12 12-12h168c6.600 0 12 5.400 12 12v8zm0-64c0 6.600-5.400 12-12 12H108c-6.600 0-12-5.400-12-12v-8c0-6.600 5.400-12 12-12h168c6.600 0 12 5.400 12 12v8zm0-72v8c0 6.600-5.400 12-12 12H108c-6.600 0-12-5.400-12-12v-8c0-6.600 5.400-12 12-12h168c6.600 0 12 5.400 12 12zm96-114.100v6.100H256V0h6.100c6.400 0 12.500 2.500 17 7l97.900 98c4.500 4.500 7 10.600 7 16.900z"/></svg><div class="t a" style="left:373px;top:516px">license.txt</div><div class="t a" style="left:933.7px;top:516px">2025, 17:24</div><div class="t a" style="left:1094px;top:516px">text/plain</div><div class="t a" style="left:1274px;top:516px">0644</div><div style="position:absolute;left:333px;top:542px;width:1040px;height:31px;background:#e5e5e5;border-bottom:1px solid #cecece"></div><svg class="i" style="left:338.00px;top:546.20px" width="15.10" height="20.30" viewBox="0 0 384 512" preserveAspectRatio="none"><g fill="none" stroke="#9c9ab6"><path d="M48 24H228L360 156V464a24 24 0 0 1-24 24H48a24 24 0 0 1-24-24V48a24 24 0 0 1 24-24z" stroke-width="46"/><path d="M232 28V152H356" stroke-width="42"/><path d="M150 292l-52 50 52 50M234 292l52 50-52 50M212 268 172 416" stroke-width="34" stroke-linecap="round" stroke-linejoin="round"/></g></svg><div class="t a" style="left:373px;top:547px">readme.html</div><div class="t a" style="left:794px;top:547px">7,23 KB</div><div class="t a" style="left:894px;top:547px">7 mar 2025, 11:45</div><div class="t a" style="left:1094px;top:547px">text/html</div><div class="t a" style="left:1274px;top:547px">0644</div><div style="position:absolute;left:333px;top:573px;width:1040px;height:31px;background:#e2e2e2;border-bottom:1px solid #cecece"></div><svg class="i" style="left:338.00px;top:577.10px" width="15.10" height="20.80" viewBox="0 0 384 512" preserveAspectRatio="none"><path fill="#a696b4" fill-rule="evenodd" d="M224 136V0H24C10.700 0 0 10.700 0 24v464c0 13.300 10.700 24 24 24h336c13.300 0 24-10.700 24-24V160H248c-13.200 0-24-10.800-24-24zm64 236c0 6.600-5.400 12-12 12H108c-6.600 0-12-5.400-12-12v-8c0-6.600 5.400-12 12-12h168c6.600 0 12 5.400 12 12v8zm0-64c0 6.600-5.400 12-12 12H108c-6.600 0-12-5.400-12-12v-8c0-6.600 5.400-12 12-12h168c6.600 0 12 5.400 12 12v8zm0-72v8c0 6.600-5.400 12-12 12H108c-6.600 0-12-5.400-12-12v-8c0-6.600 5.400-12 12-12h168c6.600 0 12 5.400 12 12zm96-114.100v6.100H256V0h6.100c6.400 0 12.500 2.500 17 7l97.900 98c4.500 4.500 7 10.600 7 16.900z"/></svg><div class="t a" style="left:373px;top:578px">sapp-wp-signon.php</div><div class="t a" style="left:794px;top:578px">3,41 KB</div><div class="t a" style="left:894px;top:578px">7 ago 2025, 15:03</div><div class="t a" style="left:1094px;top:578px">text/x-generic</div><div class="t a" style="left:1274px;top:578px">0644</div><div style="position:absolute;left:333px;top:604px;width:1040px;height:31px;background:#e5e5e5;border-bottom:1px solid #cecece"></div><svg class="i" style="left:338.00px;top:608.10px" width="15.10" height="20.80" viewBox="0 0 384 512" preserveAspectRatio="none"><path fill="#a696b4" fill-rule="evenodd" d="M224 136V0H24C10.700 0 0 10.700 0 24v464c0 13.300 10.700 24 24 24h336c13.300 0 24-10.700 24-24V160H248c-13.200 0-24-10.800-24-24zm64 236c0 6.600-5.400 12-12 12H108c-6.600 0-12-5.400-12-12v-8c0-6.600 5.400-12 12-12h168c6.600 0 12 5.400 12 12v8zm0-64c0 6.600-5.400 12-12 12H108c-6.600 0-12-5.400-12-12v-8c0-6.600 5.400-12 12-12h168c6.600 0 12 5.400 12 12v8zm0-72v8c0 6.600-5.400 12-12 12H108c-6.600 0-12-5.400-12-12v-8c0-6.600 5.400-12 12-12h168c6.600 0 12 5.400 12 12zm96-114.100v6.100H256V0h6.100c6.400 0 12.500 2.500 17 7l97.900 98c4.500 4.500 7 10.600 7 16.900z"/></svg><div class="t a" style="left:373px;top:609px">wp-activate.php</div><div class="t a" style="left:794px;top:609px">7,21 KB</div><div class="t a" style="left:894px;top:609px">13 feb 2024, 17:19</div><div class="t a" style="left:1094px;top:609px">text/x-generic</div><div class="t a" style="left:1274px;top:609px">0644</div><div style="position:absolute;left:333px;top:635px;width:1040px;height:31px;background:#e2e2e2;border-bottom:1px solid #cecece"></div><svg class="i" style="left:338.00px;top:639.10px" width="15.10" height="20.80" viewBox="0 0 384 512" preserveAspectRatio="none"><path fill="#a696b4" fill-rule="evenodd" d="M224 136V0H24C10.700 0 0 10.700 0 24v464c0 13.300 10.700 24 24 24h336c13.300 0 24-10.700 24-24V160H248c-13.200 0-24-10.800-24-24zm64 236c0 6.600-5.400 12-12 12H108c-6.600 0-12-5.400-12-12v-8c0-6.600 5.400-12 12-12h168c6.600 0 12 5.400 12 12v8zm0-64c0 6.600-5.400 12-12 12H108c-6.600 0-12-5.400-12-12v-8c0-6.600 5.400-12 12-12h168c6.600 0 12 5.400 12 12v8zm0-72v8c0 6.600-5.400 12-12 12H108c-6.600 0-12-5.400-12-12v-8c0-6.600 5.400-12 12-12h168c6.600 0 12 5.400 12 12zm96-114.100v6.100H256V0h6.100c6.400 0 12.500 2.500 17 7l97.900 98c4.500 4.500 7 10.600 7 16.900z"/></svg><div class="t a" style="left:373px;top:640px">wp-blog-header.php</div><div class="t a" style="left:794px;top:640px">351 bytes</div><div class="t a" style="left:894px;top:640px">6 feb 2020, 9:33</div><div class="t a" style="left:1094px;top:640px">text/x-generic</div><div class="t a" style="left:1274px;top:640px">0644</div><div style="position:absolute;left:333px;top:666px;width:1040px;height:31px;background:#e5e5e5;border-bottom:1px solid #cecece"></div><svg class="i" style="left:338.00px;top:670.10px" width="15.10" height="20.80" viewBox="0 0 384 512" preserveAspectRatio="none"><path fill="#a696b4" fill-rule="evenodd" d="M224 136V0H24C10.700 0 0 10.700 0 24v464c0 13.300 10.700 24 24 24h336c13.300 0 24-10.700 24-24V160H248c-13.200 0-24-10.800-24-24zm64 236c0 6.600-5.400 12-12 12H108c-6.600 0-12-5.400-12-12v-8c0-6.600 5.400-12 12-12h168c6.600 0 12 5.400 12 12v8zm0-64c0 6.600-5.400 12-12 12H108c-6.600 0-12-5.400-12-12v-8c0-6.600 5.400-12 12-12h168c6.600 0 12 5.400 12 12v8zm0-72v8c0 6.600-5.400 12-12 12H108c-6.600 0-12-5.400-12-12v-8c0-6.600 5.400-12 12-12h168c6.600 0 12 5.400 12 12zm96-114.100v6.100H256V0h6.100c6.400 0 12.500 2.500 17 7l97.900 98c4.500 4.500 7 10.600 7 16.900z"/></svg><div class="t a" style="left:373px;top:671px">wp-comments-post.php</div><div class="t a" style="left:794px;top:671px">2,27 KB</div><div class="t a" style="left:894px;top:671px">14 jun 2023, 17:11</div><div class="t a" style="left:1094px;top:671px">text/x-generic</div><div class="t a" style="left:1274px;top:671px">0644</div><div style="position:absolute;left:333px;top:697px;width:1040px;height:31px;background:#e2e2e2;border-bottom:1px solid #cecece"></div><svg class="i" style="left:338.00px;top:701.10px" width="15.10" height="20.80" viewBox="0 0 384 512" preserveAspectRatio="none"><path fill="#a696b4" fill-rule="evenodd" d="M224 136V0H24C10.700 0 0 10.700 0 24v464c0 13.300 10.700 24 24 24h336c13.300 0 24-10.700 24-24V160H248c-13.200 0-24-10.800-24-24zm64 236c0 6.600-5.400 12-12 12H108c-6.600 0-12-5.400-12-12v-8c0-6.600 5.400-12 12-12h168c6.600 0 12 5.400 12 12v8zm0-64c0 6.600-5.400 12-12 12H108c-6.600 0-12-5.400-12-12v-8c0-6.600 5.400-12 12-12h168c6.600 0 12 5.400 12 12v8zm0-72v8c0 6.600-5.400 12-12 12H108c-6.600 0-12-5.400-12-12v-8c0-6.600 5.400-12 12-12h168c6.600 0 12 5.400 12 12zm96-114.100v6.100H256V0h6.100c6.400 0 12.500 2.500 17 7l97.900 98c4.500 4.500 7 10.600 7 16.900z"/></svg><div class="t a" style="left:373px;top:702px">wp-config-sample.php</div><div class="t a" style="left:794px;top:702px">3,26 KB</div><div class="t a" style="left:894px;top:702px">15 oct 2024, 18:24</div><div class="t a" style="left:1094px;top:702px">text/x-generic</div><div class="t a" style="left:1274px;top:702px">0644</div><div style="position:absolute;left:333px;top:728px;width:1040px;height:31px;background:#e5e5e5;border-bottom:1px solid #cecece"></div><svg class="i" style="left:338.00px;top:732.10px" width="15.10" height="20.80" viewBox="0 0 384 512" preserveAspectRatio="none"><path fill="#a696b4" fill-rule="evenodd" d="M224 136V0H24C10.700 0 0 10.700 0 24v464c0 13.300 10.700 24 24 24h336c13.300 0 24-10.700 24-24V160H248c-13.200 0-24-10.800-24-24zm64 236c0 6.600-5.400 12-12 12H108c-6.600 0-12-5.400-12-12v-8c0-6.600 5.400-12 12-12h168c6.600 0 12 5.400 12 12v8zm0-64c0 6.600-5.400 12-12 12H108c-6.600 0-12-5.400-12-12v-8c0-6.600 5.400-12 12-12h168c6.600 0 12 5.400 12 12v8zm0-72v8c0 6.600-5.400 12-12 12H108c-6.600 0-12-5.400-12-12v-8c0-6.600 5.400-12 12-12h168c6.600 0 12 5.400 12 12zm96-114.100v6.100H256V0h6.100c6.400 0 12.500 2.500 17 7l97.900 98c4.500 4.500 7 10.600 7 16.900z"/></svg><div class="t a" style="left:373px;top:733px">wp-config.php</div><div class="t a" style="left:794px;top:733px">3,6 KB</div><div class="t a" style="left:894px;top:733px">14 ago 2025, 21:57</div><div class="t a" style="left:1094px;top:733px">text/x-generic</div><div class="t a" style="left:1274px;top:733px">0644</div><div style="position:absolute;left:333px;top:759px;width:1040px;height:31px;background:#e2e2e2;border-bottom:1px solid #cecece"></div><svg class="i" style="left:338.00px;top:763.10px" width="15.10" height="20.80" viewBox="0 0 384 512" preserveAspectRatio="none"><path fill="#a696b4" fill-rule="evenodd" d="M224 136V0H24C10.700 0 0 10.700 0 24v464c0 13.300 10.700 24 24 24h336c13.300 0 24-10.700 24-24V160H248c-13.200 0-24-10.800-24-24zm64 236c0 6.600-5.400 12-12 12H108c-6.600 0-12-5.400-12-12v-8c0-6.600 5.400-12 12-12h168c6.600 0 12 5.400 12 12v8zm0-64c0 6.600-5.400 12-12 12H108c-6.600 0-12-5.400-12-12v-8c0-6.600 5.400-12 12-12h168c6.600 0 12 5.400 12 12v8zm0-72v8c0 6.600-5.400 12-12 12H108c-6.600 0-12-5.400-12-12v-8c0-6.600 5.400-12 12-12h168c6.600 0 12 5.400 12 12zm96-114.100v6.100H256V0h6.100c6.400 0 12.500 2.500 17 7l97.900 98c4.500 4.500 7 10.600 7 16.900z"/></svg><div class="t a" style="left:373px;top:764px">wp-cron.php</div><div class="t a" style="left:794px;top:764px">5,49 KB</div><div class="t a" style="left:894px;top:764px">2 ago 2024, 22:40</div><div class="t a" style="left:1094px;top:764px">text/x-generic</div><div class="t a" style="left:1274px;top:764px">0644</div>
<div id="dlg" style="position:absolute;left:439px;top:345px;width:500px;height:212px;will-change:transform"><div style="position:absolute;left:0;top:28px;width:1px;height:183px;background:#c6c6c6"></div><div style="position:absolute;left:1px;top:28px;width:1px;height:183px;background:#dadada"></div><div style="position:absolute;left:498px;top:28px;width:2px;height:183px;background:#c8c8c8"></div><div style="position:absolute;left:0;top:210px;width:500px;height:1px;background:#c8c8c8"></div><div style="position:absolute;left:0;top:211px;width:500px;height:1px;background:#d6d6d6"></div><div style="position:absolute;left:0;top:0;width:500px;height:28px;background:#333"></div><div style="position:absolute;left:5.40px;top:2.20px;width:35.400px;height:16.800px;border-radius:2px 2px 4px 4px;background:linear-gradient(#c4c4c4 0,#8d8d8d 32%,#423e3d 36%,#3d3938 100%);border:1px solid #202020;box-shadow:0 0 0 0.500px #2a2a2a"></div><svg class="i" style="left:17.50px;top:5.50px" width="8.800" height="8.800" viewBox="0 0 10 10"><path d="M1.500 1.500l7 7m0-7l-7 7" stroke="#fff" stroke-width="2.700" fill="none"/></svg><div class="t" style="left:0;width:500px;top:4px;text-align:center;color:#fff;-webkit-text-stroke:0.400px #fff;font:bold 14px/20px 'Liberation Sans',sans-serif">Mover</div><div style="position:absolute;left:2px;top:28px;width:496px;height:148px;background:#fff"></div><div class="t" style="left:27.30px;top:40.00px;color:#333;letter-spacing:-0.050px;font:bold 12px/20px 'Liberation Sans',sans-serif">Ruta de acceso actual:</div><div class="t" style="left:27.30px;top:59.00px;color:#000;letter-spacing:-0.040px;font:12px/20px 'Liberation Sans',sans-serif">/public_html/.htaccess</div><div class="t" style="left:27.30px;top:90.00px;color:#333;letter-spacing:-0.043px;font:bold 12px/20px 'Liberation Sans',sans-serif">Escriba la ruta de acceso del archivo al que desea mover este archivo:</div><div style="position:absolute;left:27.30px;top:112.10px;width:440.200px;height:34px;border:1px solid #ccc;border-radius:4px;background:#fff"><div style="position:absolute;left:0;top:0;width:41px;height:32px;background:#eee;border-right:1px solid #ccc;border-radius:3px 0 0 3px"></div><svg class="i" style="left:11.70px;top:9.30px" width="16.00" height="12.80" viewBox="26 253 1612 1283" preserveAspectRatio="none"><path fill="#4d4d4d" d="M1408 992V1472Q1408 1498 1389 1517Q1370 1536 1344 1536H960V1152H704V1536H320Q294 1536 275 1517Q256 1498 256 1472V992Q256 991 256 989Q257 987 257 986L832 512L1407 986Q1408 988 1408 992ZM1631 923 1569 997Q1561 1006 1548 1008H1545Q1532 1008 1524 1001L832 424L140 1001Q128 1009 116 1008Q103 1006 95 997L33 923Q25 913 26 900Q27 886 37 878L756 279Q788 253 832 253Q876 253 908 279L1152 483V288Q1152 274 1161 265Q1170 256 1184 256H1376Q1390 256 1399 265Q1408 274 1408 288V696L1627 878Q1637 886 1638 900Q1639 913 1631 923Z"/></svg><div class="t a" style="left:52.500px;top:6px;color:#555">/public_html</div><svg class="i" style="left:56.200px;top:21.700px" width="72" height="2.200" viewBox="0 0 72 2.200"><path fill="#f22" d="M0 2.200l2.100-2.200 2.100 2.200zM6 2.200l2.100-2.200 2.100 2.200zM12 2.200l2.100-2.200 2.100 2.200zM18 2.200l2.100-2.200 2.100 2.200zM24 2.200l2.100-2.200 2.100 2.200zM30 2.200l2.100-2.200 2.100 2.200zM36 2.200l2.100-2.200 2.100 2.200zM42 2.200l2.100-2.200 2.100 2.200zM48 2.200l2.100-2.200 2.100 2.200zM54 2.200l2.100-2.200 2.100 2.200zM60 2.200l2.100-2.200 2.100 2.200zM66 2.200l2.100-2.200 2.100 2.200z"/></svg></div><div style="position:absolute;left:468.00px;top:43.00px;width:15px;height:118px;background:#fbfbfb"></div><svg class="i" style="left:471.00px;top:50.90px" width="9.200" height="7.100" viewBox="0 0 92 71"><path fill="#8a8a8a" d="M46 8 84 63H8z" stroke="#8a8a8a" stroke-width="14" stroke-linejoin="round"/></svg><svg class="i" style="left:471.00px;top:146.00px" width="9.200" height="7.100" viewBox="0 0 92 71"><path fill="#8a8a8a" d="M46 63 84 8H8z" stroke="#8a8a8a" stroke-width="14" stroke-linejoin="round"/></svg><div style="position:absolute;left:2px;top:176.00px;width:496px;height:34px;background:#efefef;border-top:1px solid #ccc"></div><div style="position:absolute;top:182.90px;height:21px;background:#e6e6e6;border-style:solid;border-width:1px 2px 2px 1px;border-color:#fff #707070 #707070 #fff;box-shadow:-0.500px -0.500px 0 0.500px #fafafa;left:363.30px;width:70.600px"><div class="t" style="left:0;width:67.600px;top:0px;text-align:center;color:#333;font:bold 10.3px/20px 'DejaVu Sans',sans-serif">Move Files</div></div><div style="position:absolute;top:182.90px;height:21px;background:#e6e6e6;border-style:solid;border-width:1px 2px 2px 1px;border-color:#fff #707070 #707070 #fff;box-shadow:-0.500px -0.500px 0 0.500px #fafafa;left:438.10px;width:53.800px"><div class="t" style="left:0;width:50.800px;top:0px;text-align:center;color:#333;font:10.3px/20px 'DejaVu Sans',sans-serif">Cancelar</div></div></div>
<div style="position:absolute;left:414px;top:424px;width:478px;height:158px;border:4px solid #f2cd18"></div><div style="position:absolute;left:405.800px;top:412.800px;width:25px;height:25px;border-radius:50%;background:#f2cd18"></div><div class="t" style="left:406px;width:25px;top:412.5px;text-align:center;color:#fff;font:bold 19.5px/22px 'Liberation Sans',sans-serif">3</div>
</body></html>
